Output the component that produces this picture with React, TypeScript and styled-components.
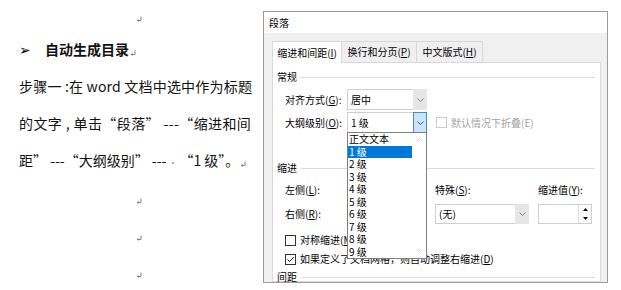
import React from 'react';
import styled, { createGlobalStyle } from 'styled-components';

const GlobalStyle = createGlobalStyle`
  html, body { margin: 0; padding: 0; background: #fff; }
  body { font-family: "Noto Sans CJK SC", "Liberation Sans", sans-serif; }
`;

const Page = styled.div`
  display: flex;
  width: 621px;
  height: 290px;
  overflow: hidden;
  background: #fff;
`;

// Document column (left)
const Doc = styled.div`
  width: 263px;
  flex-shrink: 0;
  box-sizing: border-box;
  padding: 0 6px 0 19px;
  font-size: 14px;
  color: #111;
`;

const Line = styled.div<{ $h?: number; $center?: boolean; $spacing?: number }>`
  height: ${(p) => p.$h ?? 37}px;
  line-height: ${(p) => p.$h ?? 37}px;
  text-align: ${(p) => (p.$center ? 'center' : 'left')};
  letter-spacing: ${(p) => p.$spacing ?? 0}px;
  white-space: nowrap;
`;

const Bullet = styled.span`
  display: inline-block;
  width: 26px;
  font-family: "DejaVu Sans", sans-serif;
  font-size: 14px;
  color: #000;
`;

const Bold = styled.span`
  font-weight: bold;
`;

const SpaceDot = styled.span`
  color: #9a9a9a;
  font-size: 9px;
  padding: 0 2px;
`;

const Mark = styled.svg`
  display: inline-block;
  vertical-align: -1px;
  margin-left: 1px;
`;

function ReturnMark() {
  return (
    <Mark width="6" height="6" viewBox="0 0 6 6">
      <path d="M5 0.5 V4.5 H1.2 M2.6 3.2 L1.2 4.5 L2.6 5.8" fill="none" stroke="#777" strokeWidth="0.9" />
    </Mark>
  );
}

// Dialog
const Dialog = styled.div`
  margin-top: 11px;
  width: 345px;
  height: 272px;
  box-sizing: border-box;
  border: 1px solid #9c9c9c;
  display: flex;
  flex-direction: column;
  overflow: hidden;
  font-size: 10px;
  line-height: 12px;
  color: #000;
`;

const TitleBar = styled.div`
  height: 21px;
  flex-shrink: 0;
  display: flex;
  align-items: center;
  padding-left: 5px;
  background: #fff;
`;

const Body = styled.div`
  flex: 1;
  display: flex;
  flex-direction: column;
  background: #f0f0f0;
  padding: 8px 6px 0 8px;
  min-height: 0;
`;

const TabRow = styled.div`
  display: flex;
  height: 21px;
  flex-shrink: 0;
`;

const Tab = styled.div<{ $w: number; $active?: boolean }>`
  width: ${(p) => p.$w}px;
  box-sizing: border-box;
  display: flex;
  align-items: center;
  justify-content: center;
  border: 1px solid #d9d9d9;
  border-bottom: none;
  border-left-width: ${(p) => (p.$active ? 1 : 0)}px;
  background: ${(p) => (p.$active ? '#fff' : '#f0f0f0')};
  margin-bottom: ${(p) => (p.$active ? -1 : 0)}px;
  position: relative;
  z-index: ${(p) => (p.$active ? 1 : 0)};
`;

const Panel = styled.div`
  flex: 1;
  background: #fff;
  border: 1px solid #d9d9d9;
  padding: 0 5px 0 4px;
  min-height: 0;
`;

const GroupHead = styled.div<{ $top: number }>`
  display: flex;
  align-items: center;
  height: 14px;
  margin-top: ${(p) => p.$top}px;
  &::after {
    content: '';
    flex: 1;
    height: 1px;
    background: #dcdcdc;
    margin-left: 4px;
  }
`;

const FormRow = styled.div<{ $top: number; $h?: number }>`
  display: flex;
  align-items: center;
  height: ${(p) => p.$h ?? 21}px;
  margin: ${(p) => p.$top}px 0 0 8px;
`;

const Label = styled.span<{ $w?: number; $muted?: boolean }>`
  ${(p) => (p.$w ? `width: ${p.$w}px; flex-shrink: 0;` : '')}
  color: ${(p) => (p.$muted ? '#a3a3a3' : '#000')};
  white-space: nowrap;
`;

const SelectBox = styled.div<{ $w: number }>`
  position: relative;
  width: ${(p) => p.$w}px;
  height: 100%;
  box-sizing: border-box;
  border: 1px solid #cfcfcf;
  background: #fff;
  display: flex;
  flex-shrink: 0;
`;

const SelectValue = styled.div`
  flex: 1;
  display: flex;
  align-items: center;
  padding-left: 3px;
`;

const SelectButton = styled.div<{ $focus?: boolean }>`
  width: 14px;
  margin: -1px -1px -1px 0;
  box-sizing: border-box;
  display: flex;
  align-items: center;
  justify-content: center;
  background: ${(p) => (p.$focus ? '#cce4f7' : '#e6e6e6')};
  border: 1px solid ${(p) => (p.$focus ? '#3d8ed4' : '#e6e6e6')};
`;

function Chevron({ up, color = '#7a7a7a' }: { up?: boolean; color?: string }) {
  return (
    <svg width="7" height="4" viewBox="0 0 7 4">
      <polyline
        points={up ? '0.5,3.5 3.5,0.5 6.5,3.5' : '0.5,0.5 3.5,3.5 6.5,0.5'}
        fill="none"
        stroke={color}
        strokeWidth="0.9"
      />
    </svg>
  );
}

const ListBox = styled.div`
  position: absolute;
  top: 100%;
  left: -1px;
  width: 80px;
  height: 127px;
  box-sizing: border-box;
  border: 1px solid #7f7f7f;
  background: #fff;
  display: flex;
  z-index: 5;
`;

const ListItems = styled.div`
  flex: 1;
`;

const ListItem = styled.div<{ $active?: boolean }>`
  height: 12.5px;
  line-height: 12.5px;
  padding-left: 1px;
  background: ${(p) => (p.$active ? '#0078d7' : 'transparent')};
  color: ${(p) => (p.$active ? '#fff' : '#000')};
  white-space: nowrap;
`;

const ScrollTrack = styled.div`
  width: 14px;
  display: flex;
  flex-direction: column;
  justify-content: space-between;
  align-items: center;
  padding: 5px 0;
`;

const Check = styled.div<{ $disabled?: boolean; $gap?: number }>`
  width: 11px;
  height: 11px;
  box-sizing: border-box;
  border: 1px solid ${(p) => (p.$disabled ? '#cccccc' : '#333')};
  background: #fff;
  display: flex;
  align-items: center;
  justify-content: center;
  flex-shrink: 0;
  margin: 0 4px 0 ${(p) => p.$gap ?? 0}px;
`;

const IndentGrid = styled.div`
  display: grid;
  grid-template-columns: 62px 80px 8px 94px 9px 54px;
  grid-template-rows: 20px 20px;
  row-gap: 4px;
  align-items: center;
  margin: 5px 0 0 8px;
`;

const Field = styled.div`
  height: 20px;
  box-sizing: border-box;
  border: 1px solid #cfcfcf;
  background: #fff;
  display: flex;
`;

const SpinButtons = styled.div`
  width: 12px;
  margin-left: auto;
  display: flex;
  flex-direction: column;
  border-left: 1px solid #dcdcdc;
  & > div {
    flex: 1;
    display: flex;
    align-items: center;
    justify-content: center;
  }
`;

const levels = ['正文文本', '1 级', '2 级', '3 级', '4 级', '5 级', '6 级', '7 级', '8 级', '9 级'];

export default function App() {
  return (
    <>
      <GlobalStyle />
      <Page>
        <Doc>
          <Line $h={31} $center>
            <ReturnMark />
          </Line>
          <Line>
            <Bullet>➢</Bullet>
            <Bold>自动生成目录</Bold>
            <ReturnMark />
          </Line>
          <Line $spacing={0.2}>步骤一 :在 word 文档中选中作为标题</Line>
          <Line $spacing={0.4}>的文字 , 单击“段落” ---“缩进和间</Line>
          <Line>
            距” ---“大纲级别” ---<SpaceDot>•</SpaceDot>“1 级”。<ReturnMark />
          </Line>
          <Line $center>
            <ReturnMark />
          </Line>
          <Line $center>
            <ReturnMark />
          </Line>
          <Line $center>
            <ReturnMark />
          </Line>
        </Doc>

        <Dialog>
          <TitleBar>段落</TitleBar>
          <Body>
            <TabRow>
              <Tab $w={70} $active>
                缩进和间距(<u>I</u>)
              </Tab>
              <Tab $w={75}>
                换行和分页(<u>P</u>)
              </Tab>
              <Tab $w={66}>
                中文版式(<u>H</u>)
              </Tab>
            </TabRow>
            <Panel>
              <GroupHead $top={7}>常规</GroupHead>
              <FormRow $top={5}>
                <Label $w={62}>
                  对齐方式(<u>G</u>):
                </Label>
                <SelectBox $w={80}>
                  <SelectValue>居中</SelectValue>
                  <SelectButton>
                    <Chevron />
                  </SelectButton>
                </SelectBox>
              </FormRow>
              <FormRow $top={2}>
                <Label $w={62}>
                  大纲级别(<u>O</u>):
                </Label>
                <SelectBox $w={80}>
                  <SelectValue>1 级</SelectValue>
                  <SelectButton $focus>
                    <Chevron color="#4a4a4a" />
                  </SelectButton>
                  <ListBox>
                    <ListItems>
                      {levels.map((lv) => (
                        <ListItem key={lv} $active={lv === '1 级'}>
                          {lv}
                        </ListItem>
                      ))}
                    </ListItems>
                    <ScrollTrack>
                      <Chevron up color="#c8c8c8" />
                      <Chevron color="#c8c8c8" />
                    </ScrollTrack>
                  </ListBox>
                </SelectBox>
                <Check $disabled $gap={9} />
                <Label $muted>默认情况下折叠(E)</Label>
              </FormRow>

              <GroupHead $top={28}>缩进</GroupHead>
              <IndentGrid>
                <Label>
                  左侧(<u>L</u>):
                </Label>
                <Field />
                <span />
                <Label>
                  特殊(<u>S</u>):
                </Label>
                <span />
                <Label>
                  缩进值(<u>Y</u>):
                </Label>

                <Label>
                  右侧(<u>R</u>):
                </Label>
                <Field />
                <span />
                <SelectBox $w={94}>
                  <SelectValue>(无)</SelectValue>
                  <SelectButton>
                    <Chevron />
                  </SelectButton>
                </SelectBox>
                <span />
                <Field>
                  <SpinButtons>
                    <div>
                      <svg width="5" height="3" viewBox="0 0 5 3">
                        <polygon points="0,3 2.5,0 5,3" fill="#000" />
                      </svg>
                    </div>
                    <div>
                      <svg width="5" height="3" viewBox="0 0 5 3">
                        <polygon points="0,0 2.5,3 5,0" fill="#000" />
                      </svg>
                    </div>
                  </SpinButtons>
                </Field>
              </IndentGrid>

              <FormRow $top={9} $h={14}>
                <Check />
                <Label>
                  对称缩进(<u>M</u>)
                </Label>
              </FormRow>
              <FormRow $top={5} $h={14}>
                <Check>
                  <svg width="9" height="9" viewBox="0 0 9 9">
                    <polyline points="1.5,4.5 3.6,6.6 7.8,2" fill="none" stroke="#222" strokeWidth="1" />
                  </svg>
                </Check>
                <Label>
                  如果定义了文档网格，则自动调整右缩进(<u>D</u>)
                </Label>
              </FormRow>

              <GroupHead $top={4}>间距</GroupHead>
            </Panel>
          </Body>
        </Dialog>
      </Page>
    </>
  );
}
